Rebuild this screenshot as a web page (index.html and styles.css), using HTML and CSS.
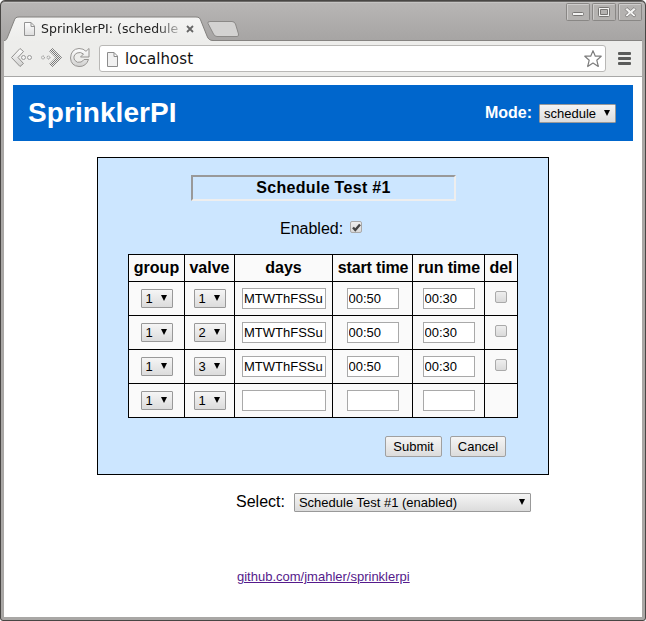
FILE: index.html
```html
<!DOCTYPE html>
<html lang="en">
<head>
<meta charset="utf-8">
<title>SprinklerPI: (schedule)</title>
<link rel="stylesheet" href="styles.css">
</head>
<body>
<div class="window">
  <div class="titlebar">
    <svg class="tabs" width="646" height="41" viewBox="0 0 646 41">
      <defs>
        <linearGradient id="tab" x1="0" y1="0" x2="0" y2="1"><stop offset="0" stop-color="#f4f4f3"/><stop offset="1" stop-color="#ededeb"/></linearGradient>
        <linearGradient id="doc" x1="0" y1="0" x2="0" y2="1"><stop offset="0" stop-color="#fff"/><stop offset="1" stop-color="#ddd"/></linearGradient>
      </defs>
      <path d="M4 40.500H642" stroke="#858381"/>
      <path d="M4 41.500C6 40 7 39 8 36L14 21C15 18 16 17 19 17H196C199 17 200 18 201 21L207 36C208 39 210 40.500 213 40.500V42H4Z" fill="url(#tab)" stroke="#82807e"/>
      <path d="M210 21.500H232Q234.500 21.500 235.500 24L238.500 34Q239 36.500 237 36.500H217Q214.500 36.500 213.500 34L208 23.500Q207 21.500 210 21.500Z" fill="#d3d2d1" stroke="#8b8987"/>
      <path d="M24.500 22.500H31L34.500 26V35.500H24.500ZM31 22.500V26.500H34.500" fill="url(#doc)" stroke="#949494"/>
      <path d="M187 26L193 32M193 26L187 32" stroke="#666" stroke-width="1.800"/>
      <g fill="#b4b2b0" stroke="#898785">
        <rect x="566.500" y="3.500" width="23" height="17" rx="1"/><rect x="592.500" y="3.500" width="23" height="17" rx="1"/><rect x="618.500" y="3.500" width="23" height="17" rx="1"/>
      </g>
      <g fill="none" stroke="#cecccb"><path d="M567.500 19.500V4.500H588.500M593.500 19.500V4.500H614.500M619.500 19.500V4.500H640.500"/></g>
      <g fill="#f3f3f2" stroke="#777573">
        <rect x="572.500" y="12.500" width="11" height="3" rx="1"/>
        <path fill-rule="evenodd" d="M599.500 7.500H608.500Q609.500 7.500 609.500 8.500V15.500Q609.500 16.500 608.500 16.500H599.500Q598.500 16.500 598.500 15.500V8.500Q598.500 7.500 599.500 7.500ZM600.500 9.500V14.500H607.500V9.500Z"/>
        <path d="M625 9.500L627 7.500L630.500 10.500L634 7.500L636 9.500L632.700 12.500L636 15.500L634 17L630.500 14L627 17L625 15.500L628.300 12.500Z" stroke-width=".8"/>
      </g>
    </svg>
    <span class="tab-title">SprinklerPI: (schedule</span>
  </div>
  <div class="toolbar">
    <svg class="nav" width="86" height="35" viewBox="0 0 86 35">
      <defs>
        <linearGradient id="ic" x1="0" y1="0" x2="0" y2="1"><stop offset="0" stop-color="#fff"/><stop offset="1" stop-color="#d0d0cf"/></linearGradient>
        <pattern id="dots" width="2" height="2" patternUnits="userSpaceOnUse"><path d="M0 0H1V1H0ZM1 1H2V2H1Z" fill="#777"/></pattern>
      </defs>
      <path d="M6.500 16.500L15 7.500L18.500 10.500L13 16.500L18.500 22.500L15 25.500Z" fill="url(#ic)" stroke="#91908e"/>
      <circle cx="18.500" cy="16.500" r="2" fill="#f4f4f3" stroke="#999"/><circle cx="24.500" cy="16.500" r="2" fill="#f4f4f3" stroke="#999"/>
      <circle cx="38" cy="16.500" r="1.500" fill="none" stroke="#888" stroke-dasharray="1 .6"/><circle cx="43.500" cy="16.500" r="1.500" fill="none" stroke="#888" stroke-dasharray="1 .6"/>
      <path d="M44 10L47.500 7L57 16.500L47.500 26L44 23L50.500 16.500Z" fill="url(#dots)"/>
      <path d="M84 7.500V16H75.500L78.500 13Q75.500 10.500 72 12Q67.500 14.500 69.500 19Q72 22.500 76 21Q78 20 79 18.500H83.500Q81 25.800 74 25.500Q66 25 65.500 17Q66 8 74 7.500Q78.500 7.500 81 10.300Z" fill="url(#ic)" stroke="#979593"/>
    </svg>
    <div class="omnibox">
      <svg width="14" height="18" viewBox="0 0 14 18"><path d="M1.500 2.500H8L11.500 6V16.500H1.500ZM8 2.500V6.500H11.500" fill="#f1f1f1" stroke="#8c8c8c"/></svg>
      <span class="url">localhost</span>
      <svg class="star" width="20" height="20" viewBox="0 0 20 20"><path d="M10 1.700L12.300 7.200H18.200L13.800 11.200L15.300 17.500L10 14L4.700 17.500L6.200 11.200L1.800 7.200H7.700Z" fill="#fff" stroke="#7d7d7d" stroke-width="1.200" stroke-linejoin="round"/></svg>
    </div>
    <div class="menu"><i></i><i></i><i></i></div>
  </div>
  <main class="page">
    <header class="banner">
      <h1>SprinklerPI</h1>
      <label class="mode">Mode:</label>
      <span class="pick mode-pick"><select><option>schedule</option></select></span>
    </header>
    <form class="schedule">
      <input class="name" value="Schedule Test #1">
      <label class="enabled">Enabled: <span class="check on"><svg width="13" height="13" viewBox="0 0 13 13"><path d="M3 6.500L5.300 9L10 3.500" fill="none" stroke="#444" stroke-width="2.400"/></svg></span></label>
      <table>
        <colgroup><col class="c-group"><col class="c-valve"><col class="c-days"><col class="c-start"><col class="c-run"><col class="c-del"></colgroup>
        <tr><th>group</th><th>valve</th><th>days</th><th class="tight">start time</th><th class="tight">run time</th><th>del</th></tr>
        <tr><td><span class="pick"><select><option>1</option></select></span></td><td><span class="pick"><select><option>1</option></select></span></td><td><input class="days" value="MTWThFSSu"></td><td><input class="time" value="00:50"></td><td><input class="time" value="00:30"></td><td><span class="check"></span></td></tr>
        <tr><td><span class="pick"><select><option>1</option></select></span></td><td><span class="pick"><select><option>2</option></select></span></td><td><input class="days" value="MTWThFSSu"></td><td><input class="time" value="00:50"></td><td><input class="time" value="00:30"></td><td><span class="check"></span></td></tr>
        <tr><td><span class="pick"><select><option>1</option></select></span></td><td><span class="pick"><select><option>3</option></select></span></td><td><input class="days" value="MTWThFSSu"></td><td><input class="time" value="00:50"></td><td><input class="time" value="00:30"></td><td><span class="check"></span></td></tr>
        <tr><td><span class="pick"><select><option>1</option></select></span></td><td><span class="pick"><select><option>1</option></select></span></td><td><input class="days"></td><td><input class="time"></td><td><input class="time"></td><td></td></tr>
      </table>
      <div class="actions"><button class="submit" type="button">Submit</button><button class="cancel" type="button">Cancel</button></div>
    </form>
    <div class="chooser"><label>Select:</label><span class="pick wide"><select><option>Schedule Test #1 (enabled)</option></select></span></div>
    <a class="repo" href="#">github.com/jmahler/sprinklerpi</a>
  </main>
</div>
</body>
</html>
```
FILE: styles.css
```css
* { box-sizing: border-box; }
body { margin: 0; font: 16px/18px "Liberation Sans", Arial, sans-serif; color: #000; background: #fff; }
.window {
  width: 646px; height: 621px; overflow: hidden; position: relative;
  background: #a9a7a5; border-radius: 5px 5px 3px 3px;
}
.window::after {
  content: ""; position: absolute; inset: 0; pointer-events: none;
  border: 1px solid #484644; border-radius: 5px 5px 3px 3px;
  box-shadow: inset 0 1px #6d6b69, inset 0 2px #c5c4c3;
}
.titlebar { height: 41px; position: relative; background: linear-gradient(#b9b7b6, #a6a4a3); }
.tabs { display: block; }
.tab-title {
  position: absolute; left: 41px; top: 20px; white-space: nowrap;
  font: 12.5px/18px "DejaVu Sans", sans-serif; letter-spacing: .05px; color: #222;
  -webkit-mask-image: linear-gradient(90deg, #000 84%, rgba(0, 0, 0, .3));
}
.toolbar { height: 36px; margin: 0 4px; display: flex; background: #ededeb; border-bottom: 1px solid #a8a8a7; }
.nav { margin-left: 1px; flex: none; }
.omnibox {
  width: 507px; height: 27px; margin: 4px 0 0 8px; padding: 0 2px 0 6px; display: flex; align-items: center;
  background: #fff; border: 1px solid #b9b8b6; border-radius: 3px;
}
.url { flex: 1; margin-left: 5px; font: 15px/20px "DejaVu Sans", sans-serif; letter-spacing: .1px; color: #111; }
.menu { margin: 11px 0 0 12px; display: flex; flex-direction: column; gap: 2px; }
.menu i { width: 13px; height: 3px; border-radius: 1px; background: #5a5b5a; }
.page { height: 540px; margin: 0 4px; padding: 8px 9px; background: #fff; }
.banner { height: 56px; padding: 0 17px 0 15px; display: flex; align-items: center; background: #06c; color: #fff; }
h1 { margin: 0 auto 0 0; font-size: 28px; line-height: 32px; letter-spacing: .08px; }
.mode { font-weight: bold; margin-right: 7px; }
.pick { position: relative; display: inline-block; vertical-align: top; width: 32px; height: 19px; }
.pick::after {
  content: ""; position: absolute; right: 6px; top: 6px; border: solid transparent;
  border-width: 6px 3.5px 0; border-top-color: #000;
}
select {
  appearance: none; display: block; width: 100%; height: 100%; margin: 0; padding: 0 4px; border: 1px solid #999;
  border-radius: 1px; background: linear-gradient(#f5f5f5, #dcdcdc); color: #000;
  font: 13px/17px "Liberation Sans", Arial, sans-serif;
}
.mode-pick { width: 77px; margin-top: 1px; }
.schedule {
  width: 452px; height: 318px; margin: 16px 0 0 84px; padding: 17px 30px 0;
  display: flex; flex-direction: column; background: #cce6ff; border: 1px solid #000;
}
input { display: block; margin: 0 auto; border: 1px solid #a9a9a9; background: #fff; color: #000; font: 13px/15px "Liberation Sans", Arial, sans-serif; outline: 0; }
.name {
  width: 265px; height: 26px; margin: 0 0 0 63px; padding: 0; flex: none; text-align: center;
  font: bold 16px/20px "Liberation Sans", Arial, sans-serif; letter-spacing: .3px;
  background: transparent; border: 2px solid; border-color: #999 #eee #eee #999;
}
.enabled { height: 20px; margin: 18px 0 0 152px; display: flex; gap: 7px; line-height: 20px; }
.check {
  display: block; flex: none; width: 12px; height: 12px; margin: 0 auto; position: relative; top: -2px;
  border: 1px solid #aaa; border-radius: 2px; background: linear-gradient(#eee, #dadada);
}
.check.on { margin: 2px 0 0; top: 0; }
.check svg { display: block; margin: -1px; }
table { width: 390px; margin-top: 15px; border-collapse: collapse; table-layout: fixed; background: #fafafa; }
.c-group { width: 56px; } .c-valve { width: 50px; } .c-days { width: 98px; }
.c-start { width: 80px; } .c-run { width: 72px; } .c-del { width: 33px; }
th, td { height: 34px; padding: 0; border: 1px solid #000; text-align: center; vertical-align: middle; }
th { height: 27px; white-space: nowrap; }
.tight { letter-spacing: -.15px; padding-left: 1px; }
.days { width: 84px; height: 21px; padding: 1px; position: relative; left: .5px; }
.time { width: 52px; height: 21px; padding: 1px; }
.actions { margin: 18px 12px 0; display: flex; justify-content: flex-end; gap: 8px; }
button {
  height: 21px; padding: 0; border: 1px solid #a0a0a0; border-radius: 2px; background: linear-gradient(#f5f5f5, #dcdcdc);
  color: #000; font: 13px/17px "Liberation Sans", Arial, sans-serif;
}
.submit { width: 57px; }
.cancel { width: 56px; }
.chooser { margin: 18px 0 0 223px; display: flex; gap: 9px; }
.wide { width: 237px; }
.repo { display: block; width: 174px; margin: 56px 0 0 224px; font-size: 13px; color: #551a8b; white-space: nowrap; }
```
